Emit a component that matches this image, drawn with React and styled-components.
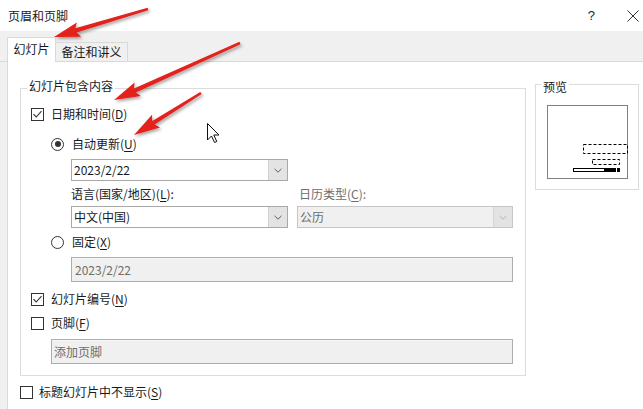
import React from "react";
import styled, { createGlobalStyle } from "styled-components";

const GlobalStyle = createGlobalStyle`
  html, body { margin: 0; padding: 0; background: #fff; }
  body { font-family: "Noto Sans CJK SC", "Noto Sans", sans-serif; }
`;

const FONT = `"Noto Sans CJK SC", "Noto Sans", sans-serif`;

const Dialog = styled.div`
  position: relative;
  width: 643px;
  height: 409px;
  overflow: hidden;
  background: #fff;
  font-family: ${FONT};
  font-size: 12px;
  line-height: 16px;
  color: #1a1a1a;
  display: flex;
  flex-direction: column;
`;

const TitleBar = styled.div`
  height: 31px;
  flex: none;
  box-sizing: border-box;
  display: flex;
  align-items: center;
  justify-content: space-between;
  padding: 0 3px 0 8px;
`;

const Title = styled.span`
  font-size: 12px;
  line-height: 16px;
`;

const Controls = styled.div`
  display: flex;
  align-items: center;
  gap: 31px;
`;

const Help = styled.span`
  font-family: "Liberation Sans", sans-serif;
  font-size: 13px;
  line-height: 16px;
  color: #222;
`;

const TabStrip = styled.div`
  height: 31px;
  flex: none;
  box-sizing: border-box;
  background: #f0f0f0;
  border-bottom: 1px solid #d9d9d9;
  display: flex;
  align-items: flex-end;
  padding-left: 7px;
`;

const Tab = styled.div`
  box-sizing: border-box;
  width: ${(p) => p.$w}px;
  height: ${(p) => (p.$active ? 25 : 19)}px;
  margin-bottom: ${(p) => (p.$active ? -1 : 0)}px;
  background: ${(p) => (p.$active ? "#fff" : "#f0f0f0")};
  border: 1px solid #d9d9d9;
  border-bottom: none;
  border-left: ${(p) => (p.$active ? "1px solid #d9d9d9" : "none")};
  display: flex;
  align-items: center;
  justify-content: center;
  padding-bottom: ${(p) => (p.$active ? 2 : 0)}px;
  color: #1a1a1a;
`;

const Body = styled.div`
  flex: 1;
  display: flex;
  background: #f0f0f0;
  padding-left: 7px;
`;

const Panel = styled.div`
  flex: 1;
  background: #fff;
  border-left: 1px solid #d9d9d9;
  display: flex;
  align-items: flex-start;
  padding-left: 12px;
`;

const LeftColumn = styled.div`
  width: 506px;
  flex: none;
  display: flex;
  flex-direction: column;
  margin-top: 26px;
`;

const GroupBox = styled.div`
  position: relative;
  box-sizing: border-box;
  width: ${(p) => p.$w}px;
  flex: none;
  border: 1px solid #dcdcdc;
  padding: ${(p) => p.$pad};
  margin: ${(p) => p.$margin || 0};
  display: flex;
  flex-direction: column;
`;

const GroupTitle = styled.span`
  position: absolute;
  top: ${(p) => p.$top}px;
  left: ${(p) => p.$left}px;
  padding: 0 2px;
  background: #fff;
  line-height: 16px;
  color: #1a1a1a;
`;

const OptionRow = styled.div`
  display: flex;
  align-items: center;
  height: 20px;
  margin-top: ${(p) => p.$mt || 0}px;
  margin-left: ${(p) => p.$indent || 0}px;
  gap: ${(p) => p.$gap || 7}px;
`;

const CheckBox = styled.span`
  width: 13px;
  height: 13px;
  box-sizing: border-box;
  border: 1px solid #333;
  background: #fff;
  display: flex;
  align-items: center;
  justify-content: center;
  flex: none;
`;

const RadioCircle = styled.span`
  width: 13px;
  height: 13px;
  box-sizing: border-box;
  border: 1px solid #333;
  border-radius: 50%;
  background: #fff;
  display: flex;
  align-items: center;
  justify-content: center;
  flex: none;
  &::after {
    content: "";
    width: 6px;
    height: 6px;
    border-radius: 50%;
    background: ${(p) => (p.$checked ? "#333" : "transparent")};
  }
`;

const OptionLabel = styled.span`
  line-height: 16px;
  white-space: nowrap;
`;

const Key = styled.u`
  text-underline-offset: 2px;
`;

const FieldRow = styled.div`
  display: flex;
  gap: 9px;
  margin-top: ${(p) => p.$mt || 0}px;
  margin-left: ${(p) => p.$indent || 0}px;
`;

const FieldLabel = styled.span`
  width: ${(p) => p.$w}px;
  height: 16px;
  line-height: 16px;
  padding-left: ${(p) => p.$pl || 0}px;
  box-sizing: border-box;
  color: ${(p) => (p.$disabled ? "#6d6d6d" : "#1a1a1a")};
  white-space: nowrap;
`;

const SelectBox = styled.div`
  width: ${(p) => p.$w}px;
  height: 22px;
  box-sizing: border-box;
  border: 1px solid ${(p) => (p.$disabled ? "#c6c6c6" : "#a9a9a9")};
  background: ${(p) => (p.$disabled ? "#f0f0f0" : "#fff")};
  display: flex;
  align-items: stretch;
  flex: none;
`;

const SelectText = styled.span`
  flex: 1;
  display: flex;
  align-items: center;
  padding-left: 2px;
  color: ${(p) => (p.$disabled ? "#6d6d6d" : "#1a1a1a")};
`;

const DropButton = styled.span`
  width: 18px;
  margin: 0;
  background: ${(p) => (p.$disabled ? "#e3e3e3" : "#e3e3e3")};
  border-left: 1px solid ${(p) => (p.$disabled ? "#d4d4d4" : "#cfcfcf")};
  display: flex;
  align-items: center;
  justify-content: center;
`;

const TextField = styled.div`
  height: 25px;
  box-sizing: border-box;
  margin-top: ${(p) => p.$mt || 0}px;
  margin-left: ${(p) => p.$indent || 0}px;
  border: 1px solid #adadad;
  background: #f0f0f0;
  box-shadow: inset 0 1px 0 #f8f8f8;
  display: flex;
  align-items: center;
  padding-left: ${(p) => p.$pl || 3}px;
  color: #6d6d6d;
`;

const PreviewPage = styled.div`
  width: 81px;
  height: 74px;
  box-sizing: border-box;
  border: 1px solid #808080;
  background: #fff;
`;

const PreviewDrawing = styled.svg`
  display: block;
  overflow: visible;
`;

const Overlay = styled.svg`
  position: absolute;
  left: 0;
  top: 0;
  width: 643px;
  height: 409px;
  pointer-events: none;
  overflow: visible;
`;

const Check = () => (
  <svg width="11" height="11" viewBox="0 0 11 11">
    <polyline points="1.5,5.2 4.2,8 9.5,2.2" fill="none" stroke="#333" strokeWidth="1.1" />
  </svg>
);

const Chevron = ({ disabled }) => (
  <svg width="8" height="5" viewBox="0 0 8 5">
    <polyline points="0.5,0.8 4,4.2 7.5,0.8" fill="none" stroke={disabled ? "#b5b5b5" : "#606060"} strokeWidth="1" />
  </svg>
);

const CloseIcon = () => (
  <svg width="14" height="14" viewBox="0 0 14 14">
    <path d="M1.5 1.5 L12.5 12.5 M12.5 1.5 L1.5 12.5" stroke="#333" strokeWidth="1" fill="none" />
  </svg>
);

const Checkbox = ({ checked, label, k, rest, ...props }) => (
  <OptionRow {...props}>
    <CheckBox>{checked && <Check />}</CheckBox>
    <OptionLabel>
      {label}(<Key>{k}</Key>){rest}
    </OptionLabel>
  </OptionRow>
);

const Radio = ({ checked, label, k, ...props }) => (
  <OptionRow $gap={8} {...props}>
    <RadioCircle $checked={checked} />
    <OptionLabel>
      {label}(<Key>{k}</Key>)
    </OptionLabel>
  </OptionRow>
);

const Select = ({ w, value, disabled }) => (
  <SelectBox $w={w} $disabled={disabled}>
    <SelectText $disabled={disabled}>{value}</SelectText>
    <DropButton $disabled={disabled}>
      <Chevron disabled={disabled} />
    </DropButton>
  </SelectBox>
);

function arrowPolygon(tail, tip, L = 26, W = 7.5, sb = 2.2, st = 1.3) {
  const dx = tail[0] - tip[0];
  const dy = tail[1] - tip[1];
  const len = Math.hypot(dx, dy);
  const ux = dx / len;
  const uy = dy / len;
  const nx = -uy;
  const ny = ux;
  const bx = tip[0] + ux * L;
  const by = tip[1] + uy * L;
  const pts = [
    [tip[0], tip[1]],
    [bx + nx * W, by + ny * W],
    [bx - ux * 3 + nx * sb, by - uy * 3 + ny * sb],
    [tail[0] + nx * st, tail[1] + ny * st],
    [tail[0] - nx * st, tail[1] - ny * st],
    [bx - ux * 3 - nx * sb, by - uy * 3 - ny * sb],
    [bx - nx * W, by - ny * W],
  ];
  return pts.map((p) => p.map((v) => v.toFixed(1)).join(",")).join(" ");
}

const ARROWS = [
  { tail: [148, 9], tip: [54, 37] },
  { tail: [240, 43], tip: [114, 100] },
  { tail: [201, 93], tip: [134, 135] },
];

const Annotations = () => (
  <Overlay viewBox="0 0 643 409">
    <defs>
      <filter id="shadow" x="-20%" y="-20%" width="140%" height="140%">
        <feDropShadow dx="1.5" dy="2" stdDeviation="1.4" floodColor="#000" floodOpacity="0.35" />
      </filter>
    </defs>
    {ARROWS.map((a, i) => (
      <polygon key={i} points={arrowPolygon(a.tail, a.tip)} fill="#e3201b" filter="url(#shadow)" />
    ))}
    <path
      d="M207.5 123.5 L207.5 140 L211.5 136 L214.5 142.5 L216.8 141.5 L213.8 135 L219 135 Z"
      fill="#fff"
      stroke="#111"
      strokeWidth="1"
      strokeLinejoin="miter"
    />
  </Overlay>
);

export default function App() {
  return (
    <>
      <GlobalStyle />
      <Dialog>
        <TitleBar>
          <Title>页眉和页脚</Title>
          <Controls>
            <Help>?</Help>
            <CloseIcon />
          </Controls>
        </TitleBar>
        <TabStrip>
          <Tab $active $w={49}>幻灯片</Tab>
          <Tab $w={72}>备注和讲义</Tab>
        </TabStrip>
        <Body>
          <Panel>
            <LeftColumn>
              <GroupBox $w={506} $pad="15px 12px 11px 10px">
                <GroupTitle $top={-11} $left={6}>幻灯片包含内容</GroupTitle>
                <Checkbox checked label="日期和时间" k="D" />
                <Radio checked label="自动更新" k="U" $indent={20} $mt={10} />
                <FieldRow $indent={40} $mt={5}>
                  <Select w={217} value="2023/2/22" />
                </FieldRow>
                <FieldRow $indent={40} $mt={5}>
                  <FieldLabel $w={217}>
                    语言(国家/地区)(<Key>L</Key>):
                  </FieldLabel>
                  <FieldLabel $w={216} $pl={2} $disabled>
                    日历类型(<Key>C</Key>):
                  </FieldLabel>
                </FieldRow>
                <FieldRow $indent={40} $mt={4}>
                  <Select w={217} value="中文(中国)" />
                  <Select w={216} value="公历" disabled />
                </FieldRow>
                <Radio label="固定" k="X" $indent={20} $mt={4} />
                <TextField $indent={40} $mt={5}>2023/2/22</TextField>
                <Checkbox checked label="幻灯片编号" k="N" $mt={7} />
                <Checkbox label="页脚" k="F" $mt={4} />
                <TextField $indent={20} $mt={6} $pl={2}>添加页脚</TextField>
              </GroupBox>
              <Checkbox label="标题幻灯片中不显示" k="S" $mt={6} $gap={6} />
            </LeftColumn>
            <GroupBox $w={104} $pad="20px 0 10px 11px" $margin="22px 0 0 9px">
              <GroupTitle $top={-6} $left={5}>预览</GroupTitle>
              <PreviewPage>
                <PreviewDrawing width="79" height="72" viewBox="0 0 79 72">
                  <rect x="35.5" y="38.5" width="44" height="9" fill="none" stroke="#000" strokeWidth="1" strokeDasharray="3 2" />
                  <rect x="44.5" y="53.5" width="27" height="5" fill="none" stroke="#000" strokeWidth="1" strokeDasharray="3 2" />
                  <rect x="25.5" y="62.5" width="31" height="3" fill="#fff" stroke="#000" strokeWidth="1" />
                  <rect x="57" y="62" width="11" height="4" fill="#000" />
                  <rect x="69" y="62" width="3" height="4" fill="#000" />
                </PreviewDrawing>
              </PreviewPage>
            </GroupBox>
          </Panel>
        </Body>
        <Annotations />
      </Dialog>
    </>
  );
}
